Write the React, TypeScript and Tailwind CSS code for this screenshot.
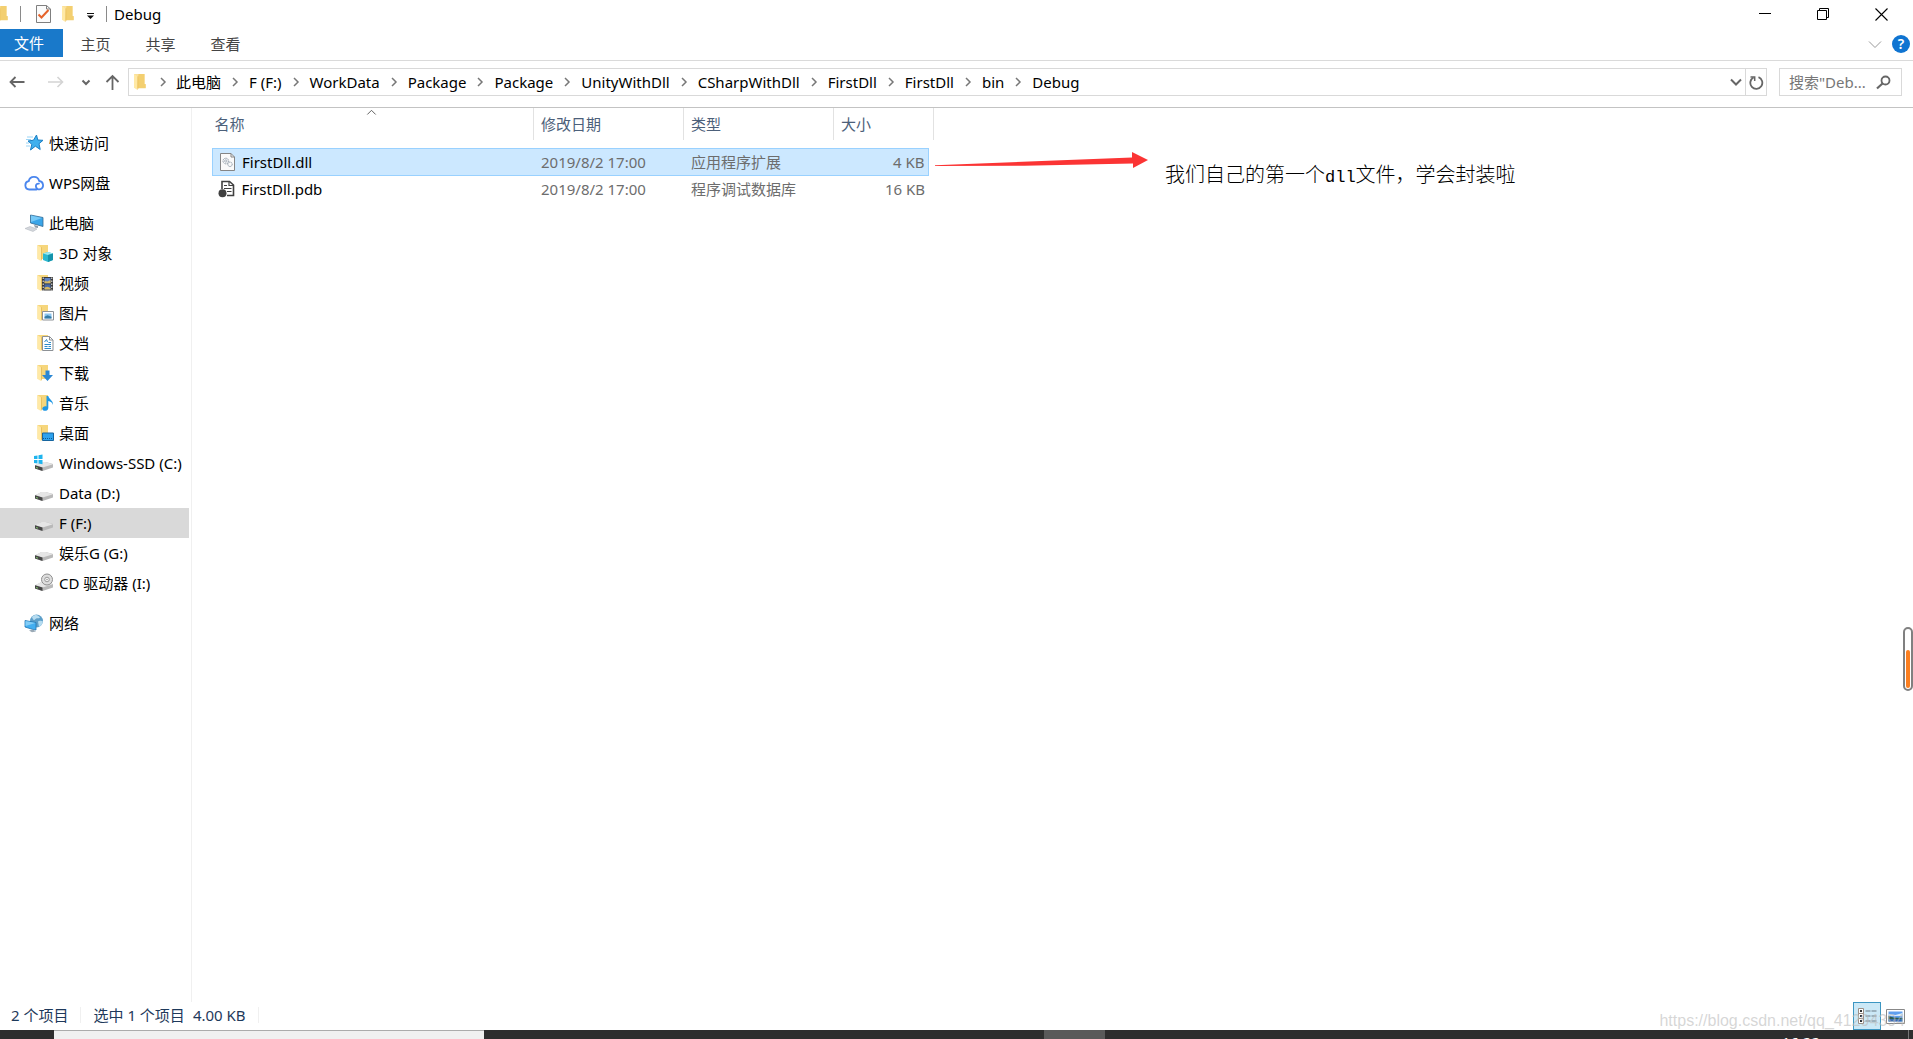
import type { ReactNode } from "react";
import clsx from "clsx";

/* -------------------------------- Icons --------------------------------- */

function FolderIcon() {
  return (
    <svg width="14" height="18" viewBox="0 0 14 18" className="shrink-0">
      <path d="M1 1h10.500v10.500h1V15H1z" fill="#fae09a" />
      <path d="M5.500 1h6v10h1.200v4.200H4z" fill="#f3cf70" />
      <path d="M1 1l3.500 2.500V17L1 14.800z" fill="#ffe9a6" />
      <path d="M4.500 3.500V17l.8-1.500V3z" fill="#e9bf5a" />
    </svg>
  );
}

/** Open folder with a small overlay drawn in the bottom right corner. */
function FolderWith({ children }: { children: ReactNode }) {
  return (
    <svg width="18" height="18" viewBox="0 0 18 18" className="shrink-0">
      <path d="M1.500 1H12v14H1.500z" fill="#f6d67c" />
      <path d="M1.500 1L5 3.500V17L1.500 15z" fill="#ffe9a6" />
      <path d="M5 3.500V17l.8-1.500V3z" fill="#e5bb58" />
      {children}
    </svg>
  );
}

function DriveIcon({ children }: { children?: ReactNode }) {
  return (
    <svg width="20" height="20" viewBox="0 0 20 20" className="shrink-0">
      <path d="M1 12.500L7.500 9h4L19 11v3.500L8.500 18 1 15.500z" fill="#b9b9b9" />
      <path d="M1 12L7.500 9h4L19 11.200 8.500 14.500z" fill="#e6e6e6" />
      <path d="M1 12.200l7.500 2.300V18L1 15.500z" fill="#454545" />
      <path d="M2 14.500l2 .6" stroke="#7fc36a" strokeWidth="1" />
      {children}
    </svg>
  );
}

const icons: Record<string, ReactNode> = {
  star: (
    <svg width="20" height="20" viewBox="0 0 20 20" className="shrink-0">
      <path
        d="M12.500 2l1.300 5 5.200.3-4 3.400 1.200 5.800-4.800-3.300L6.500 17l1.300-5.700L4 8l5.500-.8z"
        fill="#3fb0ee"
        stroke="#1b7fc4"
        strokeWidth="1"
      />
      <path d="M3 4h6M2 6.500h5M2 10h3M2 13h4" stroke="#9bd4f5" strokeWidth="1" />
    </svg>
  ),
  cloud: (
    <svg width="20" height="18" viewBox="0 0 20 18" className="shrink-0" fill="none" stroke="#4a86ee" strokeWidth="1.800" strokeLinecap="round">
      <path d="M12.500 15.500H5.300a4.200 4.200 0 0 1-.6-8.300A5.400 5.400 0 0 1 15.200 7a4.300 4.300 0 0 1 1.300 8.200c-2.500.8-4.800-1-4.600-3.400a2.600 2.600 0 0 1 3-2.200" />
    </svg>
  ),
  pc: (
    <svg width="20" height="20" viewBox="0 0 20 20" className="shrink-0">
      <path d="M6.500 2L19 4.500V13.500L6.500 10z" fill="#3aa5e8" stroke="#356a92" strokeWidth=".8" />
      <path d="M7 2.600l11 2.300L7 9z" fill="#76c9f7" />
      <path d="M10 12l4 1v2l-3-.5z" fill="#8d9aa6" />
      <path d="M1 15.500l5-2 7 2.500-4 2.500z" fill="#d4d7dc" stroke="#aab0b8" strokeWidth=".5" />
    </svg>
  ),
  objects: (
    <FolderWith>
      <path d="M7 9.500l5-1.500 5 1.500V16l-5 2-5-2z" fill="#2bb8cf" />
      <path d="M7 9.500l5-1.500 5 1.500-5 1.500z" fill="#9be8f0" />
      <path d="M12 11v7l5-2V9.500z" fill="#1593ac" />
    </FolderWith>
  ),
  video: (
    <FolderWith>
      <path d="M6 3h11v13.500H6z" fill="#3a3a3a" />
      <path d="M8.500 4h6v5.300h-6z" fill="#5f83c4" />
      <path d="M8.500 10.300h6v5.300h-6z" fill="#466aae" />
      <path d="M8.500 7l3 .5 3-1.500v3.300h-6zM8.500 13.500l3-.8 3 1.300v1.600h-6z" fill="#d7b860" />
      <path d="M7.200 3.500v13M15.800 3.500v13" stroke="#eee" strokeWidth="1" strokeDasharray="1.500 1.500" />
    </FolderWith>
  ),
  picture: (
    <FolderWith>
      <path d="M6.500 7.500h11v8.500h-11z" fill="#fff" stroke="#8d9196" />
      <path d="M8.500 9.500h7v5h-7z" fill="#8cc5ee" />
      <path d="M8.500 12.800l3-1.500 4 1.500v1.700h-7z" fill="#357ba5" />
    </FolderWith>
  ),
  document: (
    <FolderWith>
      <path d="M6.500 2.500h7l3.500 3.500v10.500H6.500z" fill="#fff" stroke="#8d9196" />
      <path d="M13.500 2.500V6H17" fill="none" stroke="#8d9196" />
      <path d="M8.500 8l2-2.500L11.500 8M12.500 8.500H15M8.500 10.500H15M8.500 12.500h3M12.500 12.500H15M8.500 14.500H15" fill="none" stroke="#2d8bc9" />
    </FolderWith>
  ),
  download: (
    <FolderWith>
      <path d="M9.500 6.500h4V11H17l-5.500 6L6 11h3.500z" fill="#2b87d3" />
    </FolderWith>
  ),
  music: (
    <FolderWith>
      <path d="M10.500 2h1.800c.4 3 5.200 4.500 4.700 9-.5-2-2.500-3.500-4.700-3.900V14c0 3.500-6 3.800-6 .8 0-2 2.200-3 4.200-2.400z" fill="#1f97e4" />
    </FolderWith>
  ),
  desktop: (
    <FolderWith>
      <path d="M6.500 9h11v7.500h-11z" fill="#2da2ee" stroke="#17659f" />
      <path d="M7 14.500h10" stroke="#0e5a93" strokeDasharray="1 1" />
    </FolderWith>
  ),
  system: (
    <DriveIcon>
      <path d="M0 3l3.500-.6V6H0zM4.500 2.200L8.500 1.600V6h-4zM0 7h3.500v3.400L0 10zM4.500 7h4v4.200l-4-.6z" fill="#1eb4ee" />
    </DriveIcon>
  ),
  drive: <DriveIcon />,
  cd: (
    <DriveIcon>
      <circle cx="13" cy="6.500" r="5.500" fill="#dedede" stroke="#8f8f8f" />
      <circle cx="13" cy="6.500" r="2.300" fill="#f7f7f7" stroke="#999" />
      <circle cx="13" cy="6.500" r=".8" fill="#999" />
    </DriveIcon>
  ),
  network: (
    <svg width="20" height="20" viewBox="0 0 20 20" className="shrink-0">
      <circle cx="12.500" cy="8" r="6.500" fill="#5d9fc9" />
      <path d="M8 4c3-3 6-2.500 8 .5-2 2-3-.5-4.500 1.500S9 7 8 4zM14 8.500c2-1.500 4 0 5 0-.5 2.500-2 4.500-4 5.500z" fill="#b6dcf0" />
      <path d="M1 7.500l11 2V17l-3-.5-8-2.500z" fill="#42aef0" stroke="#2375b0" strokeWidth=".8" />
      <path d="M1.500 8l10 2-10 3z" fill="#83cdf7" />
      <path d="M5 17.500l4-1 3 2-4 .8z" fill="#9aa9b5" />
    </svg>
  ),
};

function Chevron({ className, d, size = 14 }: { className?: string; d: string; size?: number }) {
  return (
    <svg width={size} height={size} viewBox="0 0 14 14" fill="none" stroke="currentColor" className={clsx("shrink-0", className)}>
      <path d={d} />
    </svg>
  );
}

/* --------------------------------- Data --------------------------------- */

type Place = { label: string; icon: string; nested?: boolean; selected?: boolean };

const groups: Place[][] = [
  [{ label: "快速访问", icon: "star" }],
  [{ label: "WPS网盘", icon: "cloud" }],
  [
    { label: "此电脑", icon: "pc" },
    { label: "3D 对象", icon: "objects", nested: true },
    { label: "视频", icon: "video", nested: true },
    { label: "图片", icon: "picture", nested: true },
    { label: "文档", icon: "document", nested: true },
    { label: "下载", icon: "download", nested: true },
    { label: "音乐", icon: "music", nested: true },
    { label: "桌面", icon: "desktop", nested: true },
    { label: "Windows-SSD (C:)", icon: "system", nested: true },
    { label: "Data (D:)", icon: "drive", nested: true },
    { label: "F (F:)", icon: "drive", nested: true, selected: true },
    { label: "娱乐G (G:)", icon: "drive", nested: true },
    { label: "CD 驱动器 (I:)", icon: "cd", nested: true },
  ],
  [{ label: "网络", icon: "network" }],
];

const crumbs = [
  "此电脑",
  "F (F:)",
  "WorkData",
  "Package",
  "Package",
  "UnityWithDll",
  "CSharpWithDll",
  "FirstDll",
  "FirstDll",
  "bin",
  "Debug",
];

const files = [
  { name: "FirstDll.dll", date: "2019/8/2 17:00", type: "应用程序扩展", size: "4 KB", selected: true },
  { name: "FirstDll.pdb", date: "2019/8/2 17:00", type: "程序调试数据库", size: "16 KB", selected: false },
];

/* -------------------------------- Window -------------------------------- */

function TitleBar() {
  return (
    <header className="flex h-[29px] items-center pb-px">
      <div className="flex w-[9px] justify-end overflow-hidden">
        <FolderIcon />
      </div>
      <span className="ml-[11px] h-4 w-px bg-[#8a8a8a]" />
      <button aria-label="属性" className="ml-[15px]">
        <svg width="15" height="18" viewBox="0 0 15 18" fill="none">
          <path d="M.5.500h10l4 3.500v13.500H.5z" fill="#fbfbfb" stroke="#7f7f7f" />
          <path d="M10.500.500V4h4" stroke="#7f7f7f" />
          <path d="M2.500 9.500l3 3L12.500 5" stroke="#e5622a" strokeWidth="2" />
        </svg>
      </button>
      <button aria-label="新建文件夹" className="ml-2.5">
        <FolderIcon />
      </button>
      <button aria-label="自定义快速访问工具栏" className="ml-3">
        <svg width="7" height="6" viewBox="0 0 7 6" className="mt-1">
          <path d="M0 0h7v1H0zM0 2.500h7L3.500 6z" fill="#111" />
        </svg>
      </button>
      <span className="mr-[7px] ml-3 h-4 w-px bg-[#8a8a8a]" />
      <h1 className="flex-1 truncate">Debug</h1>
      <button aria-label="最小化" className="flex h-full w-[58px] items-center justify-center">
        <svg width="12" height="12" viewBox="0 0 12 12" stroke="#000">
          <path d="M0 5.500h12" />
        </svg>
      </button>
      <button aria-label="向下还原" className="flex h-full w-[58px] items-center justify-center">
        <svg width="12" height="12" viewBox="0 0 12 12" fill="none" stroke="#000">
          <path d="M.5 2.500h9v9h-9zM2.500 2.500v-2h9v9h-2" />
        </svg>
      </button>
      <button aria-label="关闭" className="mr-[3px] flex h-full w-[58px] items-center justify-center">
        <svg width="13" height="13" viewBox="0 0 13 13" stroke="#000" strokeWidth="1.100">
          <path d="M.5.500l12 12M12.500.500l-12 12" />
        </svg>
      </button>
    </header>
  );
}

function Ribbon() {
  return (
    <div className="flex h-8 items-start border-b border-[#dadada]">
      <button className="h-7 w-[63px] bg-[#1979ca] pl-[14px] text-left text-white">文件</button>
      {["主页", "共享", "查看"].map((tab) => (
        <button key={tab} className="h-7 w-[65px] pt-px text-[#444]">
          {tab}
        </button>
      ))}
      <div className="ml-auto flex h-[30px] items-center gap-2.5 pr-[3px]">
        <button aria-label="展开功能区" className="text-[#999]">
          <Chevron d="M1 4.500l6 6 6-6" />
        </button>
        <button aria-label="帮助" className="flex size-[18px] items-center justify-center rounded-full bg-[#0f74d1] text-sm font-semibold text-white">
          ?
        </button>
      </div>
    </div>
  );
}

function AddressBar() {
  return (
    <div className="flex h-[47px] items-center border-b border-[#c3c3c3] pr-[11px] pb-1 pl-[9px]">
      <button aria-label="后退" className="text-[#666]">
        <svg width="16" height="14" viewBox="0 0 16 14" fill="none" stroke="currentColor" strokeWidth="1.800">
          <path d="M15.500 7H1.500M6.500 2l-5 5 5 5" />
        </svg>
      </button>
      <button aria-label="前进" className="ml-[23px] text-[#d4d4d4]">
        <svg width="16" height="14" viewBox="0 0 16 14" fill="none" stroke="currentColor" strokeWidth="1.600">
          <path d="M0 7h14M9.500 2l5 5-5 5" />
        </svg>
      </button>
      <button aria-label="最近浏览的位置" className="ml-[15px] text-[#666]">
        <Chevron d="M3.500 5.500L7 9l3.500-3.500" className="stroke-2" />
      </button>
      <button aria-label="上移" className="ml-3 text-[#666]">
        <svg width="15" height="16" viewBox="0 0 15 16" fill="none" stroke="currentColor" strokeWidth="1.800">
          <path d="M7.500 16V2M1.500 8l6-6 6 6" />
        </svg>
      </button>
      <nav aria-label="路径" className="ml-2 flex h-7 min-w-0 flex-1 items-center border border-[#d9d9d9] pl-1">
        <FolderIcon />
        {crumbs.map((crumb, i) => (
          <div key={i} className="flex items-center whitespace-nowrap">
            <Chevron d="M5 3l4 4-4 4" className={clsx("stroke-[1.5px] text-[#777]", i === 0 ? "mr-1.5 ml-[9px]" : "mx-[7px]")} />
            <a href="#" className="text-black">
              {crumb}
            </a>
          </div>
        ))}
        <button aria-label="以前的位置" className="mr-0.5 ml-auto text-[#666]">
          <Chevron d="M2 4.500l5 5 5-5" className="stroke-2" />
        </button>
        <button aria-label="刷新" className="flex h-full w-[21px] items-center justify-center border-l border-[#d9d9d9] text-[#666]">
          <svg width="15" height="15" viewBox="0 0 15 15" fill="none" stroke="currentColor" strokeWidth="1.800">
            <path d="M9.500 2.200a6 6 0 1 1-5 .3" />
            <path d="M1.500 2h4.200v4" strokeWidth="1.500" />
          </svg>
        </button>
      </nav>
      <form className="ml-3 flex h-7 w-[123px] items-center border border-[#d9d9d9] pr-2.5 pl-[9px]">
        <input
          type="text"
          aria-label="搜索"
          placeholder={'搜索"Deb...'}
          className="w-0 min-w-0 flex-1 outline-none placeholder:text-[#777]"
        />
        <svg width="15" height="15" viewBox="0 0 15 15" fill="none" stroke="#666" strokeWidth="1.800" className="shrink-0">
          <circle cx="9.500" cy="5.500" r="4" />
          <path d="M6.500 8.500L1 13.500" strokeWidth="2.200" />
        </svg>
      </form>
    </div>
  );
}

function Sidebar() {
  return (
    <nav aria-label="导航窗格" className="flex w-48 shrink-0 flex-col gap-2.5 border-r border-[#f0f0f0] pt-5 pr-0.5">
      {groups.map((group, i) => (
        <ul key={i}>
          {group.map((place) => (
            <li key={place.label}>
              <a
                href="#"
                className={clsx(
                  "flex h-[30px] items-center whitespace-nowrap text-black",
                  place.nested ? "pl-[34px]" : "pl-6",
                  place.selected && "bg-[#d9d9d9]",
                )}
              >
                <span className="flex w-[25px] items-center">
                  <span className={clsx("flex w-5", place.nested && "justify-end")}>{icons[place.icon]}</span>
                </span>
                {place.label}
              </a>
            </li>
          ))}
        </ul>
      ))}
    </nav>
  );
}

function DllIcon() {
  return (
    <svg width="15" height="18" viewBox="0 0 15 18" fill="none" className="shrink-0">
      <path d="M.5.500h10.500l3.500 3.500v13.500H.5z" fill="#fafafa" stroke="#858585" />
      <path d="M11 .5V4h3.500" stroke="#858585" />
      <circle cx="5.800" cy="8" r="2.800" stroke="#8b98a5" strokeDasharray="1.300 .6" />
      <circle cx="5.800" cy="8" r="1.200" stroke="#8b98a5" strokeWidth=".7" />
      <circle cx="10" cy="11.300" r="2.200" stroke="#8b98a5" strokeDasharray="1.200 .5" />
    </svg>
  );
}

function PdbIcon() {
  return (
    <svg width="17" height="18" viewBox="0 0 17 18" fill="none" className="-ml-0.5 shrink-0">
      <path d="M4 9V1.500h7.500L15.500 5v10.500H9" stroke="#404040" strokeWidth="1.600" />
      <path d="M11 1v4.500h4.500M6 5.500h3M6 8.500h7.500M9 11.500h4.500" stroke="#404040" strokeWidth="1.200" />
      <circle cx="4.500" cy="13.200" r="4" fill="#404040" />
    </svg>
  );
}

function FileTable() {
  return (
    <table className="w-[722px] shrink-0 table-fixed border-collapse self-start">
      <colgroup>
        <col />
        <col className="w-[150px]" />
        <col className="w-[150px]" />
        <col className="w-[95px]" />
        <col className="w-[5px]" />
      </colgroup>
      <thead className="text-left text-[#4c607a]">
        <tr>
          {["名称", "修改日期", "类型", "大小"].map((title, i) => (
            <th key={title} scope="col" colSpan={i === 3 ? 2 : 1} className="relative p-0 pb-2 font-normal">
              <div className={clsx("flex h-8 items-center border-r border-[#e2e2e2]", i === 0 ? "pl-0.5" : "pl-[7px]")}>
                {title}
              </div>
              {i === 0 && <Chevron d="M2.500 7l4.500-4.500L11.500 7" className="absolute top-0 left-[152px] text-[#555]" size={13} />}
            </th>
          ))}
        </tr>
      </thead>
      <tbody className="text-[#6d6d6d]">
        {files.map((file) => {
          const cell = clsx("h-[27px] p-0", file.selected && "border-y border-[#99d1ff] bg-[#cce8ff]");
          return (
            <tr key={file.name}>
              <td className={clsx(cell, file.selected && "border-l")}>
                <div className="flex items-center gap-[7px] pl-[7px] text-black">
                  {file.selected ? <DllIcon /> : <PdbIcon />}
                  {file.name}
                </div>
              </td>
              <td className={clsx(cell, "pl-[7px]")}>{file.date}</td>
              <td className={clsx(cell, "pl-[7px]")}>{file.type}</td>
              <td className={clsx(cell, "pr-1 text-right", file.selected && "border-r")}>{file.size}</td>
              <td className="p-0" />
            </tr>
          );
        })}
      </tbody>
    </table>
  );
}

function StatusBar() {
  return (
    <footer className="relative flex h-7 items-center text-[#1e395b]">
      <div className="flex items-center pb-0.5">
        <span className="ml-[11px]">2 个项目</span>
        <span className="mx-3 h-4 w-px bg-[#f0f0f0]" />
        <span>选中 1 个项目</span>
        <span className="ml-2">4.00 KB</span>
        <span className="ml-3 h-4 w-px bg-[#f0f0f0]" />
      </div>
      <div className="ml-auto flex items-center pr-2">
        <button aria-label="详细信息" className="flex h-7 w-7 items-center justify-center border border-[#3c96c2] bg-[#cbe8f6]">
          <svg width="19" height="18" viewBox="0 0 19 18" fill="none">
            <path d="M.5 1.500h5v5h-5zM.5 6.500h5v5h-5zM.5 11.500h5v5h-5z" fill="#fff" stroke="#9b8f86" />
            <path d="M2 3h2v2H2zM2 8h2v2H2zM2 13h2v2H2z" fill="#333" />
            <path d="M7.500 4h5M13.500 4h5M7.500 9h5M13.500 9h5M7.500 14h5M13.500 14h5" stroke="#6b7a85" />
          </svg>
        </button>
        <button aria-label="大缩略图" className="ml-[5px]">
          <svg width="19" height="15" viewBox="0 0 19 15">
            <path d="M.5.500h18v14H.5z" fill="#fff" stroke="#888" />
            <path d="M2.500 2.500h14v10h-14z" fill="#5f9fee" />
            <path d="M2.500 5l7 1 7-2v3h-14z" fill="#d7ebfb" />
            <path d="M2.500 7l5 1.500 9 .5v1.500h-14z" fill="#2c5b4f" />
            <path d="M2.500 10.500h14v2h-14z" fill="#3568b5" />
          </svg>
        </button>
      </div>
      <span className="absolute right-2 -bottom-px font-['Liberation_Sans',sans-serif] text-base leading-5 text-[#bbb]/60">
        https://blog.csdn.net/qq_41294394
      </span>
    </footer>
  );
}

function Taskbar() {
  return (
    <div className="flex h-[9px] overflow-hidden bg-[#2e2e2e]">
      <div className="ml-[54px] w-[430px] border-t border-[#ababab] bg-[#f0f0f0]" />
      <div className="ml-[560px] w-[61px] bg-[#5a5a5a]" />
      <span className="mt-0.5 mr-[88px] ml-auto text-white">16:22</span>
      <span className="mr-1 w-px bg-[#777]" />
    </div>
  );
}

export default function App() {
  return (
    <div className="relative flex min-h-screen flex-col overflow-hidden bg-white font-['Noto_Sans','Noto_Sans_CJK_SC',sans-serif] text-[15px] leading-5 text-black">
      <TitleBar />
      <Ribbon />
      <AddressBar />
      <div className="flex flex-1">
        <Sidebar />
        <main className="flex min-w-0 flex-1 pl-5">
          <FileTable />
          <svg width="215" height="18" viewBox="0 0 215 18" className="mt-11 shrink-0">
            <path d="M1 13.300L198 5.500V0l16 8-15 8v-4.500L90 13.800 1 14z" fill="#fb3434" />
          </svg>
          <p className="mt-[55px] ml-4 text-xl leading-6 font-light whitespace-nowrap">
            我们自己的第一个
            <span className="font-['Liberation_Mono',monospace] text-[17px]">dll</span>
            文件，学会封装啦
          </p>
        </main>
      </div>
      <StatusBar />
      <Taskbar />
      <div className="absolute top-[627px] right-0 flex h-16 w-2.5 items-end rounded-full border-2 border-[#808080] bg-white p-px">
        <span className="h-[38px] w-full rounded-full bg-[#fb7f20]" />
      </div>
    </div>
  );
}
